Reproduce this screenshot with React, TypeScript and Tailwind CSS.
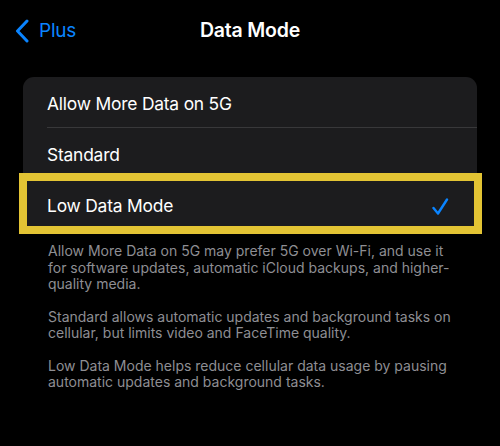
const font = { fontFamily: 'Inter, "Noto Sans", sans-serif' };

const options = [
  { label: 'Allow More Data on 5G', selected: false },
  { label: 'Standard', selected: false },
  { label: 'Low Data Mode', selected: true },
];

function Checkmark() {
  return (
    <svg width="18" height="18" viewBox="0 0 18 18" fill="none" className="text-[#0a84ff]">
      <path d="M2.5 10 L7 15.5 L16 1.5" stroke="currentColor" strokeWidth="2.4" strokeLinecap="round" strokeLinejoin="round" />
    </svg>
  );
}

export default function App() {
  return (
    <div className="w-[500px] h-[446px] bg-black text-white overflow-hidden" style={font}>
      {/* nav bar */}
      <div className="relative h-[62px] flex items-center">
        <div className="flex items-center pl-[14px] text-[#0a84ff]">
          <svg width="16" height="24" viewBox="0 0 16 24" fill="none">
            <path d="M13 2 L3.5 12 L13 22" stroke="currentColor" strokeWidth="3" strokeLinecap="round" strokeLinejoin="round" />
          </svg>
          <span className="ml-[9px] text-[19px] tracking-[-0.2px]">Plus</span>
        </div>
        <div className="absolute inset-x-0 text-center text-[19.5px] font-semibold tracking-[-0.2px] pointer-events-none">
          Data Mode
        </div>
      </div>

      {/* options card */}
      <div className="mt-[15px] mx-[23px] w-[454px] rounded-[11px] bg-[#1c1c1e]">
        {options.map((o, i) => (
          <div key={o.label} className="relative h-[51px] pl-[24px]">
            <div
              className={`h-full flex items-center pt-[4px] pr-[28px] ${i < options.length - 1 ? 'border-b border-[#38383a]' : ''}`}
            >
              <span className="flex-1 text-[17.4px] tracking-[-0.2px]">{o.label}</span>
              {o.selected && <Checkmark />}
            </div>
            {o.selected && (
              <div className="absolute -top-[6px] -bottom-[4px] -left-[4px] -right-[5px] border-[8px] border-[#e3c434] pointer-events-none" />
            )}
          </div>
        ))}
      </div>

      {/* footer notes */}
      <div className="mt-[13px] pl-[48px] pr-[48px] text-[14px] leading-[16.5px] text-[#8e8e93] flex flex-col gap-[16px]">
        <p>
          Allow More Data on 5G may prefer 5G over Wi-Fi, and use it for software updates, automatic iCloud backups, and higher-quality media.
        </p>
        <p>Standard allows automatic updates and background tasks on cellular, but limits video and FaceTime quality.</p>
        <p>Low Data Mode helps reduce cellular data usage by pausing automatic updates and background tasks.</p>
      </div>
    </div>
  );
}
